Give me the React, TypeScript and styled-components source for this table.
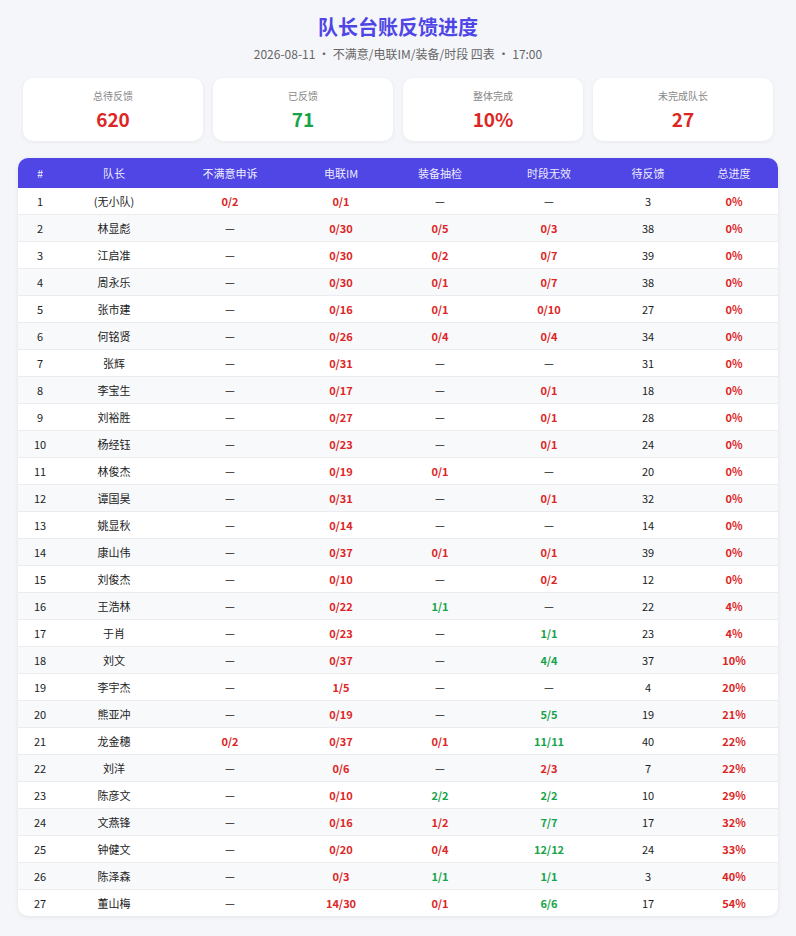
import React from "react";
import styled, { createGlobalStyle } from "styled-components";

const GlobalStyle = createGlobalStyle`
  html, body {
    margin: 0;
    padding: 0;
    background: #f5f6fa;
  }
  body {
    font-family: "Noto Sans CJK SC", "Noto Sans", "Liberation Sans", sans-serif;
    color: #222;
  }
`;

const Page = styled.div`
  padding: 11px 18px 20px;
`;

const Title = styled.h1`
  margin: 0;
  text-align: center;
  font-size: 20px;
  line-height: 32px;
  font-weight: 700;
  color: #4f46e5;
`;

const SubTitle = styled.div`
  margin-top: 2px;
  text-align: center;
  font-size: 12px;
  line-height: 18px;
  color: #666;
`;

const Cards = styled.div`
  display: grid;
  grid-template-columns: repeat(4, 1fr);
  gap: 10px;
  margin: 15px 5px 0;
`;

const Card = styled.div`
  background: #fff;
  border-radius: 10px;
  box-shadow: 0 1px 4px rgba(0, 0, 0, 0.06);
  padding: 10px 0 9px;
  text-align: center;
`;

const CardLabel = styled.div`
  font-size: 10px;
  line-height: 16px;
  color: #888;
`;

const CardValue = styled.div<{ $tone: "red" | "green" }>`
  font-size: 19px;
  line-height: 26px;
  font-weight: 700;
  margin-top: 2px;
  color: ${(p) => (p.$tone === "green" ? "#16a34a" : "#dc2626")};
`;

const TableWrap = styled.div`
  margin-top: 17px;
  background: #fff;
  border-radius: 10px;
  overflow: hidden;
  box-shadow: 0 1px 4px rgba(0, 0, 0, 0.08);
`;

const Table = styled.table`
  width: 100%;
  border-collapse: collapse;
  table-layout: fixed;
  font-size: 11px;
`;

const Th = styled.th`
  background: #4f46e5;
  color: rgba(255, 255, 255, 0.92);
  font-weight: 400;
  height: 30px;
  padding: 0;
  text-align: center;
`;

const Row = styled.tr`
  &:nth-child(even) td {
    background: #f8f9fb;
  }
  &:last-child td {
    border-bottom: none;
  }
`;

const Td = styled.td`
  height: 26px;
  padding: 0;
  text-align: center;
  border-bottom: 1px solid #ececf0;
  color: #222;
`;

const Val = styled.span<{ $tone?: "red" | "green" | "dash" }>`
  font-weight: ${(p) => (p.$tone === "dash" || !p.$tone ? 400 : 700)};
  color: ${(p) =>
    p.$tone === "red" ? "#dc2626" : p.$tone === "green" ? "#16a34a" : "#222"};
`;

const widths = [44, 104, 128, 94, 104, 114, 84, 88];
const heads = ["#", "队长", "不满意申诉", "电联IM", "装备抽检", "时段无效", "待反馈", "总进度"];

type R = [string, string, string, string, string, number, string];

const rows: R[] = [
  ["(无小队)", "0/2", "0/1", "", "", 3, "0%"],
  ["林显彪", "", "0/30", "0/5", "0/3", 38, "0%"],
  ["江启准", "", "0/30", "0/2", "0/7", 39, "0%"],
  ["周永乐", "", "0/30", "0/1", "0/7", 38, "0%"],
  ["张市建", "", "0/16", "0/1", "0/10", 27, "0%"],
  ["何铭贤", "", "0/26", "0/4", "0/4", 34, "0%"],
  ["张辉", "", "0/31", "", "", 31, "0%"],
  ["李宝生", "", "0/17", "", "0/1", 18, "0%"],
  ["刘裕胜", "", "0/27", "", "0/1", 28, "0%"],
  ["杨经钰", "", "0/23", "", "0/1", 24, "0%"],
  ["林俊杰", "", "0/19", "0/1", "", 20, "0%"],
  ["谭国昊", "", "0/31", "", "0/1", 32, "0%"],
  ["姚显秋", "", "0/14", "", "", 14, "0%"],
  ["康山伟", "", "0/37", "0/1", "0/1", 39, "0%"],
  ["刘俊杰", "", "0/10", "", "0/2", 12, "0%"],
  ["王浩林", "", "0/22", "1/1", "", 22, "4%"],
  ["于肖", "", "0/23", "", "1/1", 23, "4%"],
  ["刘文", "", "0/37", "", "4/4", 37, "10%"],
  ["李宇杰", "", "1/5", "", "", 4, "20%"],
  ["熊亚冲", "", "0/19", "", "5/5", 19, "21%"],
  ["龙金穗", "0/2", "0/37", "0/1", "11/11", 40, "22%"],
  ["刘洋", "", "0/6", "", "2/3", 7, "22%"],
  ["陈彦文", "", "0/10", "2/2", "2/2", 10, "29%"],
  ["文燕锋", "", "0/16", "1/2", "7/7", 17, "32%"],
  ["钟健文", "", "0/20", "0/4", "12/12", 24, "33%"],
  ["陈泽森", "", "0/3", "1/1", "1/1", 3, "40%"],
  ["董山梅", "", "14/30", "0/1", "6/6", 17, "54%"],
];

// done/total → green when complete, red otherwise, dash when empty
const Ratio = ({ v }: { v: string }) => {
  if (!v) return <Val $tone="dash">—</Val>;
  const [a, b] = v.split("/");
  return <Val $tone={a === b ? "green" : "red"}>{v}</Val>;
};

const stats = [
  { label: "总待反馈", value: "620", tone: "red" as const },
  { label: "已反馈", value: "71", tone: "green" as const },
  { label: "整体完成", value: "10%", tone: "red" as const },
  { label: "未完成队长", value: "27", tone: "red" as const },
];

export default function App() {
  return (
    <>
      <GlobalStyle />
      <Page>
        <Title>队长台账反馈进度</Title>
        <SubTitle>2026-08-11 ・ 不满意/电联IM/装备/时段 四表 ・ 17:00</SubTitle>
        <Cards>
          {stats.map((s) => (
            <Card key={s.label}>
              <CardLabel>{s.label}</CardLabel>
              <CardValue $tone={s.tone}>{s.value}</CardValue>
            </Card>
          ))}
        </Cards>
        <TableWrap>
          <Table>
            <colgroup>
              {widths.map((w, i) => (
                <col key={i} style={{ width: w }} />
              ))}
            </colgroup>
            <thead>
              <tr>
                {heads.map((h) => (
                  <Th key={h}>{h}</Th>
                ))}
              </tr>
            </thead>
            <tbody>
              {rows.map((r, i) => (
                <Row key={i}>
                  <Td>{i + 1}</Td>
                  <Td>{r[0]}</Td>
                  <Td><Ratio v={r[1]} /></Td>
                  <Td><Ratio v={r[2]} /></Td>
                  <Td><Ratio v={r[3]} /></Td>
                  <Td><Ratio v={r[4]} /></Td>
                  <Td>{r[5]}</Td>
                  <Td><Val $tone="red">{r[6]}</Val></Td>
                </Row>
              ))}
            </tbody>
          </Table>
        </TableWrap>
      </Page>
    </>
  );
}
